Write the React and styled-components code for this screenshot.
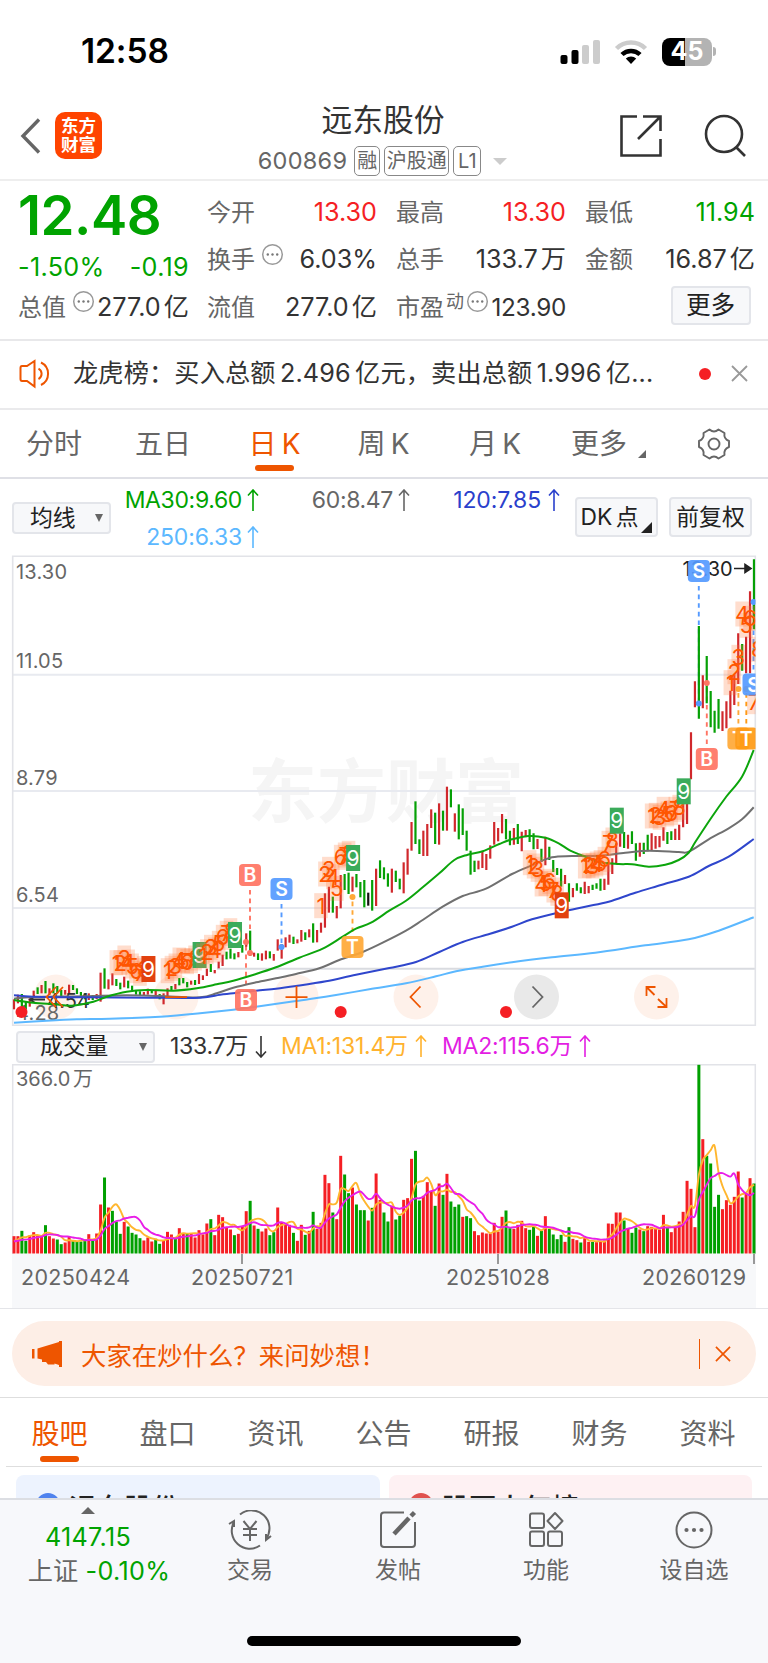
import React from 'react';
import styled, { createGlobalStyle, css } from 'styled-components';

const GREEN = '#00a300';
const RED = '#f51f24';
const ORANGE = '#ee5500';

const Global = createGlobalStyle`
  * { box-sizing: border-box; }
  body { margin: 0; background: #fff; }
`;

const Screen = styled.div`
  width: 768px;
  height: 1663px;
  overflow: hidden;
  display: flex;
  flex-direction: column;
  background: #fff;
  color: #333;
  font-family: Inter, "Noto Sans CJK SC", sans-serif;
  font-size: 24px;
  line-height: 1;
  white-space: nowrap;
`;

/* ---------- status bar ---------- */
const StatusBar = styled.div`
  height: 100px;
  flex: none;
  display: flex;
  align-items: center;
  justify-content: space-between;
  padding: 3px 52px 0 81px;
`;
const Clock = styled.div`
  font-size: 33.5px;
  font-weight: 600;
  color: #000;
  letter-spacing: -0.1px;
`;
const StatusIcons = styled.div`
  display: flex;
  align-items: center;
  gap: 14px;
`;
const Battery = styled.div`
  width: 50px;
  height: 28px;
  border-radius: 8px;
  background: linear-gradient(90deg, #000 0 46%, #b3b3b3 46%);
  color: #fff;
  font-size: 25px;
  font-weight: 700;
  display: flex;
  align-items: center;
  justify-content: center;
`;
const BatteryWrap = styled.div`
  display: flex;
  align-items: center;
  gap: 1px;
`;
const Nub = styled.div`
  width: 3px;
  height: 9px;
  border-radius: 0 4px 4px 0;
  background: #b3b3b3;
`;

/* ---------- header ---------- */
const Header = styled.header`
  height: 81px;
  flex: none;
  display: grid;
  grid-template-columns: 200px 1fr 200px;
  border-bottom: 2px solid #eee;
`;
const HeaderSide = styled.div`
  display: flex;
  align-items: flex-start;
  gap: ${(p) => (p.$end ? '41px' : '13px')};
  justify-content: ${(p) => (p.$end ? 'flex-end' : 'flex-start')};
  padding: ${(p) => (p.$end ? '14px 22px 0 0' : '12px 0 0 20px')};
`;
const Logo = styled.div`
  width: 47px;
  height: 47px;
  border-radius: 10px;
  background: #ff4400;
  color: #fff;
  font-weight: 700;
  font-size: 17.5px;
  line-height: 19px;
  text-align: center;
  padding-top: 4px;
  white-space: pre-line;
`;
const HeaderCenter = styled.div`
  display: flex;
  flex-direction: column;
  align-items: center;
`;
const Title = styled.h1`
  margin: 4px 2px 0 0;
  font-size: 30.8px;
  line-height: 32px;
  font-weight: 400;
`;
const SubTitle = styled.div`
  display: flex;
  align-items: center;
  gap: 4px;
  margin: 10px 3px 0 0;
  height: 30px;
`;
const Code = styled.span`
  font-size: 23.5px;
  letter-spacing: 0.3px;
  color: #666;
  margin-right: 3px;
`;
const Tag = styled.span`
  height: 30px;
  width: ${(p) => p.$w}px;
  text-align: center;
  border: 1.5px solid #888;
  border-radius: 5px;
  font-size: 20px;
  line-height: 28px;
  color: #666;
`;
const Caret = styled.i`
  width: 0;
  height: 0;
  border-left: ${(p) => p.$w / 2}px solid transparent;
  border-right: ${(p) => p.$w / 2}px solid transparent;
  ${(p) => (p.$up ? 'border-bottom' : 'border-top')}: ${(p) => p.$h}px solid ${(p) => p.$color || '#666'};
  margin-left: ${(p) => p.$ml || 0}px;
`;
const Corner = styled.i`
  width: 0;
  height: 0;
  border-left: ${(p) => p.$size}px solid transparent;
  border-bottom: ${(p) => p.$size}px solid ${(p) => p.$color};
  ${(p) => p.$low && css`
    align-self: flex-end;
    margin: 0 0 2px 3px;
  `}
`;

/* ---------- quote ---------- */
const Quote = styled.section`
  height: 160px;
  flex: none;
  display: flex;
  padding: 8px 12px 0 18px;
  border-bottom: 2px solid #e8e8ea;
`;
const PriceColumn = styled.div`
  width: 171px;
  display: flex;
  flex-direction: column;
`;
const Price = styled.div`
  font-size: 54.5px;
  font-weight: 600;
  color: ${GREEN};
  height: 57px;
  line-height: 53px;
  letter-spacing: -0.5px;
`;
const Change = styled.div`
  display: flex;
  justify-content: space-between;
  color: ${GREEN};
  height: 38px;
  line-height: 42px;
  font-size: 25.2px;
  letter-spacing: 0.3px;
`;
const Stats = styled.div`
  flex: 1;
  display: grid;
  grid-template-columns: repeat(3, 170px);
  grid-auto-rows: 47.5px;
  column-gap: 19px;
  padding-left: 18px;
`;
const Stat = styled.div`
  height: 47px;
  display: flex;
  align-items: center;
`;
const StatLabel = styled.span`
  color: #666;
`;
const StatValue = styled.span`
  margin-left: auto;
  color: ${(p) => p.$color || '#333'};
  font-size: ${(p) => (p.$small ? 24.3 : 25.2)}px;
  letter-spacing: ${(p) => (p.$small ? -0.3 : 0)}px;
  word-spacing: -4px;
`;
const Sup = styled.span`
  display: flex;
  align-items: center;
  gap: ${(p) => p.$gap || 0}px;
  font-size: 18px;
  color: #666;
  margin: -12px 0 0 ${(p) => p.$ml}px;
  height: 22px;
`;
const MoreButton = styled.button`
  width: 80px;
  height: 39px;
  margin: 2px 4px 0 auto;
  padding: 0 1px 0 0;
  border: 2px solid #e3e5ea;
  border-radius: 4px;
  background: #f7f8fa;
  font: inherit;
  font-size: 24.6px;
  color: #222;
`;

/* ---------- notice ---------- */
const Notice = styled.section`
  height: 69px;
  flex: none;
  display: flex;
  align-items: center;
  padding: 0 20px 2px 19px;
  border-bottom: 2px solid #eaeaec;
`;
const NoticeText = styled.div`
  margin-left: 20px;
  width: 590px;
  font-size: 25.2px;
  letter-spacing: 0.15px;
  word-spacing: -3px;
`;
const Dot = styled.i`
  width: 12px;
  height: 12px;
  border-radius: 50%;
  background: ${RED};
  margin: 0 20px 0 auto;
`;

/* ---------- tabs ---------- */
const PeriodTabs = styled.nav`
  height: 69px;
  flex: none;
  display: flex;
  align-items: center;
  border-bottom: 2px solid #dfe0e6;
`;
const tabText = css`
  display: flex;
  flex-direction: column;
  align-items: center;
  font-size: 28px;
  color: ${(p) => (p.$active ? ORANGE : '#666')};
  &::after {
    content: '';
    width: 39px;
    height: 6px;
    border-radius: 3px;
    background: ${(p) => (p.$active ? ORANGE : 'transparent')};
  }
`;
const PeriodTab = styled.div`
  ${tabText}
  width: ${(p) => p.$w || 110}px;
  padding-top: 14px;
  gap: 7px;
  word-spacing: -2.5px;
`;
const MoreTab = styled.div`
  display: flex;
  align-items: flex-end;
  gap: 11px;
  color: #666;
  font-size: 28px;
  width: 143px;
  padding-left: 17px;
`;

/* ---------- averages ---------- */
const AverageBar = styled.section`
  height: 76px;
  flex: none;
  display: flex;
  padding: 0 15px 0 12px;
`;
const Select = styled.div`
  width: ${(p) => p.$w}px;
  height: 32px;
  display: flex;
  align-items: center;
  justify-content: space-between;
  padding: 0 6px 0 ${(p) => p.$pl}px;
  border: 2px solid #e3e5ea;
  border-radius: 4px;
  background: #f7f8fa;
  font-size: 22.8px;
  color: #222;
`;
const SelectSlot = styled.div`
  padding-top: 23px;
`;
const Averages = styled.div`
  display: grid;
  grid-template-columns: 149px 151px 150px;
  grid-template-rows: 37px 37px;
  padding-top: 3px;
  width: 464px;
`;
const Average = styled.span`
  display: flex;
  align-items: center;
  justify-content: flex-end;
  gap: ${(p) => p.$gap || 4}px;
  font-size: 23px;
  letter-spacing: ${(p) => p.$ls || -0.35}px;
  color: ${(p) => p.$color};
`;
const ToolButton = styled.div`
  width: 83px;
  height: 40px;
  margin: 18px ${(p) => p.$mr || 0}px 0 0;
  border: 2px solid #e3e5ea;
  border-radius: 4px;
  background: #f7f8fa;
  display: flex;
  align-items: center;
  justify-content: center;
  font-size: 22.8px;
  word-spacing: -3px;
  color: #222;
  flex: none;
`;

/* ---------- charts ---------- */
const ChartArea = styled.section`
  height: 471px;
  flex: none;
  svg { display: block; }
`;
const VolumeBar = styled.div`
  height: 38px;
  flex: none;
  display: flex;
  align-items: center;
  padding: 3px 0 0 16px;
`;
const VolumeItem = styled.span`
  display: flex;
  align-items: center;
  gap: 7px;
  font-size: 23px;
  letter-spacing: -0.25px;
  color: ${(p) => p.$color};
  width: ${(p) => p.$w}px;
  padding-left: ${(p) => p.$pl || 0}px;
`;
const VolumeArea = styled.section`
  height: 190px;
  flex: none;
  svg { display: block; }
`;
const DateAxis = styled.div`
  height: 55px;
  flex: none;
  padding: 0 12px;
  border-bottom: 1px solid #e4e5e9;
`;
const DateStrip = styled.div`
  height: 54px;
  background: #f7f8fa;
  display: flex;
  color: #666;
  font-size: 21.5px;
  letter-spacing: 0.3px;
`;
const DateCell = styled.div`
  width: ${(p) => p.$w}px;
  padding: 13px 0 0 ${(p) => p.$pl}px;
`;
const AxisTicks = styled.div`
  height: 0;
  padding-left: 229px;
  display: flex;
  gap: 254px;
  i { width: 2px; height: 10px; background: #999; flex: none; }
`;

/* ---------- banner ---------- */
const BannerWrap = styled.section`
  height: 89px;
  flex: none;
  padding: 12px 12px 0;
  border-bottom: 1px solid #dedede;
`;
const Banner = styled.div`
  height: 65px;
  border-radius: 32.5px;
  background: #fdeee6;
  color: ${ORANGE};
  display: flex;
  align-items: center;
  padding: 0 25px 0 19px;
  font-size: 25.4px;
`;
const BannerText = styled.span`
  margin-left: 18px;
  padding-top: 4px;
  flex: 1;
`;
const Divider = styled.i`
  width: 1.5px;
  height: 30px;
  background: ${ORANGE};
  margin-right: 15px;
`;

/* ---------- content ---------- */
const SectionTabs = styled.nav`
  height: 69px;
  flex: none;
  display: flex;
  margin: 0 6px;
  border-bottom: 1px solid #dedede;
`;
const SectionTab = styled.div`
  ${tabText}
  width: 108.1px;
  padding: 22px 1px 0 0;
  gap: 8px;
`;
const Cards = styled.section`
  height: 31px;
  flex: none;
  overflow: hidden;
  display: flex;
  gap: 9px;
  padding: 8px 16px 0;
`;
const Card = styled.div`
  width: 363.5px;
  height: 80px;
  border-radius: 8px 8px 0 0;
  background: ${(p) => p.$bg};
  display: flex;
  align-items: flex-start;
  padding: 18px 0 0 20px;
  gap: 9px;
  font-size: 27.5px;
  font-weight: 500;
  line-height: 31px;
  color: #222;
`;
const Badge = styled.i`
  width: 24px;
  height: 24px;
  border-radius: 50%;
  background: ${(p) => p.$color};
`;

/* ---------- bottom bar ---------- */
const BottomBar = styled.footer`
  flex: 1;
  display: flex;
  flex-direction: column;
  background: #f7f8fb;
  border-top: 2px solid #dcdee3;
`;
const Actions = styled.div`
  display: flex;
  height: 136px;
`;
const IndexBox = styled.div`
  width: 176px;
  padding-top: 7px;
  display: flex;
  flex-direction: column;
  align-items: center;
  color: ${GREEN};
`;
const IndexRow = styled.div`
  margin-top: ${(p) => p.$mt}px;
  font-size: 25.2px;
  letter-spacing: 0.3px;
  padding-left: ${(p) => p.$pl || 0}px;
  span { color: #666; letter-spacing: 0; }
`;
const Action = styled.div`
  width: 148px;
  padding-top: 10px;
  display: flex;
  flex-direction: column;
  align-items: center;
  gap: 9px;
  font-size: 23px;
  color: #666;
`;
const HomeBar = styled.div`
  width: 274px;
  height: 10px;
  border-radius: 5px;
  background: #000;
  margin: 0 auto;
`;

/* ---------- icons ---------- */
const Info = () => (
  <svg width="23" height="23" viewBox="0 0 23 23" fill="none" stroke="#999" strokeWidth="1.5">
    <circle cx="11.5" cy="11.5" r="9.8" />
    <g fill="#777" stroke="none"><circle cx="6.8" cy="11.5" r="1.2" /><circle cx="11.5" cy="11.5" r="1.2" /><circle cx="16.2" cy="11.5" r="1.2" /></g>
  </svg>
);
const Cross = ({ color = '#999', size = 17 }) => (
  <svg width={size} height={size} viewBox="0 0 17 17" stroke={color} strokeWidth="1.8"><path d="M1 1L16 16M16 1L1 16" /></svg>
);
const Arrow = ({ down, w = 12 }) => (
  <svg width={w} height="23" viewBox="0 0 12 23" fill="none" stroke="currentColor" strokeWidth="1.6">
    <path d={down ? 'M6 1V22M1 16.5L6 22L11 16.5' : 'M6 22V1M1 6.5L6 1L11 6.5'} />
  </svg>
);

/* ---------- data ---------- */
const STEP = 3.936;
const barX = (i) => 14 + STEP * i;

const volumes = `52R 52R 68G 38G 54R 64R 54R 54R 85G 52R 45R 42G 28G 33R 50R 38G 36G 36G 40G 58R 41G 60R 147R 228G 138R 128G 96G 59G 95R 81G 62G 57G 46G 39R 48R 36R 44G 29G 40R 65R 57R 46G 76R 60R 60G 60R 48R 70R 57R 90R 103G 55R 116R 109R 79R 72R 55G 59R 81R 127R 158G 84R 74G 66R 75R 55G 64G 138R 94R 90R 86R 62G 38R 86R 56G 68R 125G 74R 92R 236R 211R 123G 103R 293R 237G 181G 198R 147G 130G 130G 99R 137G 240R 161R 123G 96G 143R 102G 113G 161R 166R 284R 308G 159G 173R 214R 188R 143G 210R 176G 239R 156G 140G 147G 110R 112G 106G 67R 55R 63R 60R 60R 92R 66R 110R 129G 76G 74R 86R 98R 76R 71G 80G 53R 68G 112R 74G 57G 43G 56G 35R 79G 44R 40R 33G 46R 35R 35G 34R 36R 39R 90R 89R 123R 123R 99G 76R 62G 78G 72R 67G 82R 80R 74R 72R 116R 78G 64R 80R 96R 125R 218R 194R 79R 566G 343R 293G 270G 140G 176G 133R 160R 146R 170R 246R 168G 181R 226R 210G`
  .split(' ')
  .map((s) => ({ h: parseInt(s, 10) / 3, up: s.endsWith('R') }));

const toCandles = (offset, text) =>
  text.split(' ').map((s) => {
    const [, a, b, c] = s.match(/^(-?\d+)-(\d+)([RGK])$/);
    return { top: offset + a / 3, bottom: offset + b / 3, tone: c };
  });

const candles = [
  ...toCandles(850, '448-478R 434-460R 432-480G 455-478G 445-470R 422-440R 412-432G 405-430R 393-430G 415-435R 400-430G 408-430G 420-440G 420-434R 404-432R 405-420G 415-432G 426-440G 430-448G 430-450R 435-450G 432-447R 368-455R 355-416G 388-418R 370-406R 387-408G 398-418G 380-412R 392-415G 407-422G 422-434G 424-438G 426-438R 416-434R 420-430G 420-438R 432-448G 430-463R 415-440R 408-420G 402-418R 384-406G 384-400G 396-412G 392-404R 390-405G 372-402R 376-390R 356-378R 342-366G 360-370R 335-355R 314-348R 305-328G 296-326G 310-328G 306-322R 285-308G 250-290R 242-318G 308-320R'),
  ...toCandles(740, '640-660G 640-662R 632-658R 634-655G 642-662R 598-632R 612-656R 592-622R 584-608R 590-612G 598-610R 570-605R 577-600G 568-592R 550-608G 570-607R 548-578R 460-563R 440-518R 470-518G 498-535R 405-505R 402-450G 398-462G 410-455R 402-442G 426-472G 420-502G 458-497K 420-512G 386-498R 361-414G 382-418G 400-440G 386-458R 392-426G 416-448G 367-460R 326-404R 246-332R 184-312G 298-342G 272-348R 252-348R 208-264R 218-312G 190-314R 212-272G 140-272R 148-202G 220-275R 193-298G 205-285G 272-332G 332-404G 362-396G 362-388R 334-384R 342-390R 316-356R 246-314R 264-304R 222-280R 237-298G 272-316G'),
  ...toCandles(740, '264-314R 252-312G 275-334R 270-292R 268-306G 280-328G 297-327R 326-366G 290-376R 320-360G 360-396G 384-405G 386-440G 405-432R 430-485G 444-472R 430-452G 442-460G 425-462R 438-460R 434-450G 430-446G 416-452G 416-450R 368-434R 355-402R 310-372R 280-320R 276-324G 284-326R 274-312G 310-362G 308-350R 308-342G 284-334G 280-332R 288-326R 288-322R 262-302R 276-312G 274-300G 266-300R 254-300R 190-262R 150-252R -23-118R'),
  ...toCandles(550, '394-472R 228-506G 376-475R 318-460G 423-532G 482-548G 447-536G 484-543R 454-535R 422-505R 374-465R 250-402R 282-362G 260-370R 124-370R 28-238G'),
];
const tones = { R: '#d0282c', G: '#05a005', K: '#111' };

const smooth = (pts) => {
  let d = `M${pts[0][0]} ${pts[0][1]}`;
  for (let i = 0; i < pts.length - 1; i += 1) {
    const p0 = pts[i - 1] || pts[i];
    const p1 = pts[i];
    const p2 = pts[i + 1];
    const p3 = pts[i + 2] || p2;
    const c = [p1[0] + (p2[0] - p0[0]) / 6, p1[1] + (p2[1] - p0[1]) / 6, p2[0] - (p3[0] - p1[0]) / 6, p2[1] - (p3[1] - p1[1]) / 6];
    d += `C${c.map((n) => n.toFixed(1)).join(' ')} ${p2[0]} ${p2[1]}`;
  }
  return d;
};
const part = (ox, oy, pts) => pts.map(([x, y]) => [+(ox + x / 3).toFixed(1), +(oy + y / 3).toFixed(1)]);

const lines = [
  {
    color: '#5cb8ff',
    pts: [
      ...part(0, 850, [[42, 518], [140, 512], [230, 508], [330, 506], [480, 500], [600, 490], [700, 479]]),
      ...part(256, 740, [[0, 800], [120, 783], [240, 765], [340, 748], [450, 730], [540, 709], [600, 694], [680, 680]]),
      ...part(512, 740, [[0, 667], [120, 652], [250, 638], [400, 616], [530, 598], [620, 572], [725, 532]]),
    ],
  },
  {
    color: '#707070',
    pts: [
      ...part(0, 850, [[42, 446], [100, 441], [250, 439], [380, 436], [480, 438], [600, 442], [650, 430], [700, 413]]),
      ...part(256, 740, [[0, 727], [60, 715], [120, 702], [190, 685], [250, 660], [320, 636], [380, 608], [450, 572], [500, 540], [560, 500], [620, 468], [690, 446]]),
      ...part(512, 740, [[0, 402], [60, 376], [120, 352], [180, 348], [260, 347], [340, 338], [410, 332], [500, 336], [530, 335], [590, 298], [650, 265], [690, 238], [725, 202]]),
    ],
  },
  {
    color: '#2f46cc',
    pts: [
      ...part(0, 850, [[42, 436], [100, 440], [250, 442], [450, 443], [600, 443], [660, 434], [700, 430]]),
      ...part(256, 740, [[0, 752], [60, 746], [120, 738], [210, 724], [300, 704], [400, 684], [480, 666], [550, 636], [620, 606], [700, 582]]),
      ...part(512, 740, [[0, 560], [60, 538], [150, 515], [220, 500], [290, 485], [370, 458], [450, 434], [530, 410], [590, 378], [650, 350], [725, 297]]),
    ],
  },
  {
    color: '#0ca50c',
    pts: [
      ...part(0, 850, [[42, 450], [100, 458], [165, 463], [215, 467], [280, 455], [320, 440], [380, 425], [440, 420], [520, 422], [590, 415], [650, 403], [700, 392]]),
      ...part(256, 740, [[0, 702], [60, 682], [130, 653], [200, 626], [260, 590], [300, 566], [345, 548], [400, 512], [450, 482], [500, 442], [550, 400], [595, 360], [635, 344], [680, 334], [730, 312]]),
      ...part(512, 740, [[0, 298], [50, 288], [100, 293], [140, 310], [175, 332], [215, 348], [260, 366], [320, 372], [360, 373], [410, 380], [460, 374], [500, 360], [530, 338], [550, 306], [600, 230], [640, 174], [690, 110], [725, 30]]),
    ],
  },
];

const runs = [
  { start: 26, oy: 850, ys: [338, 338, 324, 336, 348, 362, 370, 356], nine: 357, color: '#e2410f' },
  { start: 39, oy: 850, ys: [362, 355, 348, 330, 332, 335, 332, 324], nine: 315, color: '#3bab5a' },
  { start: 48, oy: 850, ys: [318, 305, 292, 300, 280, 262, 250, 242], nine: 255, color: '#3bab5a' },
  { start: 78, oy: 740, ys: [497, 402, 388, 410, 445, 352, 345, 340], nine: 354, color: '#3bab5a' },
  { start: 131, oy: 740, ys: [368, 378, 388, 432, 430, 424, 450, 460], nine: 496, color: '#e2410f' },
  { start: 145, oy: 740, ys: [378, 376, 378, 372, 368, 358, 310, 300], nine: 242, color: '#3bab5a' },
  { start: 162, oy: 740, ys: [228, 226, 232, 208, 222, 218, 208, 202], nine: 154, color: '#3bab5a' },
  { start: 182, oy: 550, ys: [398, 365, 322, 192, 226, 205, 455, 298] },
];

const signals = [
  { t: 'B', x: 250, y: 875, dot: 953, c: '#ff7463' },
  { t: 'B', x: 246, y: 1000, dot: 942, c: '#ff7463' },
  { t: 'S', x: 281.5, y: 889, dot: 947, c: '#559aff' },
  { t: 'T', x: 352.5, y: 947, dot: 897, c: '#ffa836' },
  { t: 'S', x: 698.8, y: 571, dot: 703.5, c: '#559aff' },
  { t: 'B', x: 706.8, y: 759, dot: 683, c: '#ff7463' },
  { t: 'T', x: 738.4, y: 738.5, dot: 689, c: '#ffa836' },
  { t: 'T', x: 746.3, y: 738.5, dot: 689, c: '#ff9a14' },
  { t: 'S', x: 753.5, y: 684.5, dot: 602, c: '#559aff' },
];

const average = (n) =>
  volumes.map((_, i) => {
    let sum = 0;
    for (let k = i - n + 1; k <= i; k += 1) sum += k < 0 ? 11.5 : volumes[k].h;
    return [+barX(i).toFixed(1), +(189.5 - sum / n).toFixed(1)];
  });

const KLine = () => (
  <svg width="768" height="471" viewBox="0 555 768 471" fontFamily='Inter, "Noto Sans CJK SC", sans-serif'>
    <defs><clipPath id="plot"><rect x="12" y="555" width="743.5" height="471" /></clipPath></defs>
    <text x="386" y="817" fontSize="69" fontWeight="700" fill="#f5f5f5" textAnchor="middle">东方财富</text>
    <g stroke="#e8eaf0" strokeWidth="2">
      <path d="M12 674.7H755M12 791H755M12 908H755" />
      <path d="M217 968.7H755" stroke="#d9dbe0" />
      <path d="M12.7 1025.3V556.3H755.3V1025.3Z" fill="none" stroke="#e2e3e8" strokeWidth="1.6" />
    </g>
    {[56, 176, 296, 416, 536.5, 656.5].map((x) => (
      <circle key={x} cx={x} cy="997" r="22.5" fill={x === 536.5 ? '#e9e9e9' : '#fef1ea'} />
    ))}
    <g fontSize="20" fill="#666" letterSpacing="0.2">
      <text x="16" y="578.5">13.30</text>
      <text x="16" y="668">11.05</text>
      <text x="16" y="785">8.79</text>
      <text x="16" y="902">6.54</text>
      <text x="16" y="1019.5">4.28</text>
    </g>
    <g clipPath="url(#plot)">
      {signals.map((s, i) => (
        <path key={i} d={`M${s.x} ${s.y + (s.dot > s.y ? 15 : -15)}V${s.dot}`} stroke={s.c} strokeWidth="1.9" strokeDasharray="4.6 4" />
      ))}
      {candles.map((c, i) => (
        <line key={i} x1={barX(i)} x2={barX(i)} y1={c.top} y2={c.bottom} stroke={tones[c.tone]} strokeWidth="2.2" />
      ))}
      <g fill="#333" stroke="#333">
        <path d="M45 999.5H30M35 996L30 999.5L35 1003" fill="none" strokeWidth="2" />
        <text x="47" y="1008" fontSize="20" stroke="none">4.54</text>
      </g>
      <text x="682.5" y="576" fontSize="20" fill="#222">13.30</text>
      <path d="M734 568.5H750M745 564.5L751 568.5L745 572.5Z" stroke="#222" strokeWidth="1.6" fill="#222" />
      {lines.map((l) => <path key={l.color} d={smooth(l.pts)} stroke={l.color} strokeWidth="2" fill="none" />)}
      {runs.map((r) => (
        <g key={r.start}>
          {r.ys.map((y, k) => (
            <rect key={k} x={barX(r.start + k) - 6.8} y={r.oy + y / 3 - 12.5} width="13.6" height="25" fill="#ff7a3c" opacity="0.26" />
          ))}
          <g fontSize="22" fill="#ff5500" textAnchor="middle">
            {r.ys.map((y, k) => <text key={k} x={barX(r.start + k)} y={r.oy + y / 3 + 8}>{k + 1}</text>)}
          </g>
          {r.nine && <rect x={barX(r.start + 8) - 6.4} y={r.oy + r.nine / 3 - 13} width="14" height="26" fill={r.color} />}
          {r.nine && <text x={barX(r.start + 8) + 0.6} y={r.oy + r.nine / 3 + 7.5} fontSize="21" fill="#fff" textAnchor="middle">9</text>}
        </g>
      ))}
      {signals.map((s, i) => (
        <g key={i}>
          <circle cx={s.x} cy={s.dot} r="3" fill={s.c} />
          <rect x={s.x - 11} y={s.y - 11} width="22" height="22" rx="4" fill={s.c} fillOpacity="0.92" />
          <text x={s.x} y={s.y + 7} fontSize="19.5" fontWeight="600" fill="#fff" textAnchor="middle">{s.t}</text>
        </g>
      ))}
    </g>
    <g fill="none" stroke={ORANGE} strokeWidth="1.8">
      <path d="M56 987L46.5 997L56 1007M63 987L53.5 997L63 1007" />
      <path d="M165 997.2H187M285.5 997.2H307.5M296.5 986V1008" />
      <path d="M420.5 986.5L410.5 997L420.5 1007.5" />
      <path d="M646.5 996V987H655.5M646.5 987L654.5 995M666.5 998V1007H657.5M666.5 1007L658 999" />
    </g>
    <path d="M532.5 986.5L542.5 997L532.5 1007.5" fill="none" stroke="#666" strokeWidth="1.8" />
    <g fill={RED}><circle cx="21.5" cy="1012" r="6" /><circle cx="340.7" cy="1012" r="6" /><circle cx="506" cy="1012" r="6" /></g>
  </svg>
);

const Volume = () => (
  <svg width="768" height="190" viewBox="0 0 768 190" fontFamily='Inter, "Noto Sans CJK SC", sans-serif'>
    <path d="M12.7 190V0.8H755.3V190" fill="none" stroke="#e2e3e8" strokeWidth="1.5" />
    <text x="16" y="21.5" fontSize="20" fill="#666" wordSpacing="-3">366.0 万</text>
    {volumes.map((v, i) => (
      <rect key={i} x={barX(i) - 1.5} y={189.5 - v.h} width="3" height={v.h} fill={v.up ? RED : '#00a000'} />
    ))}
    <path d={smooth(average(5))} stroke="#ffb62e" strokeWidth="1.9" fill="none" />
    <path d={smooth(average(10))} stroke="#e81ee8" strokeWidth="1.9" fill="none" />
  </svg>
);

export default function App() {
  return (
    <Screen>
      <Global />
      <StatusBar>
        <Clock>12:58</Clock>
        <StatusIcons>
          <svg width="40" height="26" viewBox="0 0 40 26">
            <rect x="0.5" y="16" width="7" height="9" rx="2" />
            <rect x="11.5" y="11" width="7" height="14" rx="2" />
            <rect x="22" y="6" width="7" height="19" rx="2" fill="#ccc" />
            <rect x="33" y="1" width="7" height="24" rx="2" fill="#ccc" />
          </svg>
          <svg width="34" height="26" viewBox="0 0 34 26" fill="none" strokeWidth="4.5">
            <path d="M2.5 9.5A20.5 20.5 0 0 1 31.5 9.5" stroke="#ccc" />
            <path d="M8 15.5A13 13 0 0 1 26 15.5" stroke="#000" />
            <path d="M17 25L11.8 19.5A7.5 7.5 0 0 1 22.2 19.5Z" fill="#000" />
          </svg>
          <BatteryWrap><Battery>45</Battery><Nub /></BatteryWrap>
        </StatusIcons>
      </StatusBar>

      <Header>
        <HeaderSide>
          <svg width="22" height="47" viewBox="0 0 22 47" fill="none" stroke="#666" strokeWidth="3.4"><path d="M19 7.5L3 24L19 40.5" /></svg>
          <Logo>{'东方\n财富'}</Logo>
        </HeaderSide>
        <HeaderCenter>
          <Title>远东股份</Title>
          <SubTitle>
            <Code>600869</Code>
            <Tag $w={26}>融</Tag><Tag $w={65}>沪股通</Tag><Tag $w={28}>L1</Tag>
            <Caret $w={14} $h={7} $color="#ccc" $ml={8} />
          </SubTitle>
        </HeaderCenter>
        <HeaderSide $end>
          <svg width="44" height="44" viewBox="0 0 44 44" fill="none" stroke="#333" strokeWidth="2.6">
            <path d="M18 2.5H2.5V41.5H41.5V25M24 2.5H41.5V17M41.5 2.5L19 25" />
          </svg>
          <svg width="42" height="44" viewBox="0 0 42 44" fill="none" stroke="#333" strokeWidth="2.6">
            <circle cx="20" cy="20" r="18" /><path d="M32 33L41 42" />
          </svg>
        </HeaderSide>
      </Header>

      <Quote>
        <PriceColumn>
          <Price>12.48</Price>
          <Change><span>-1.50%</span><span>-0.19</span></Change>
          <Stat>
            <StatLabel>总值</StatLabel><Sup $ml={6}><Info /></Sup><StatValue>277.0 亿</StatValue>
          </Stat>
        </PriceColumn>
        <Stats>
          <Stat><StatLabel>今开</StatLabel><StatValue $color={RED}>13.30</StatValue></Stat>
          <Stat><StatLabel>最高</StatLabel><StatValue $color={RED}>13.30</StatValue></Stat>
          <Stat><StatLabel>最低</StatLabel><StatValue $color={GREEN}>11.94</StatValue></Stat>
          <Stat><StatLabel>换手</StatLabel><Sup $ml={6}><Info /></Sup><StatValue>6.03%</StatValue></Stat>
          <Stat><StatLabel>总手</StatLabel><StatValue>133.7 万</StatValue></Stat>
          <Stat><StatLabel>金额</StatLabel><StatValue>16.87 亿</StatValue></Stat>
          <Stat><StatLabel>流值</StatLabel><StatValue>277.0 亿</StatValue></Stat>
          <Stat><StatLabel>市盈</StatLabel><Sup $ml={2} $gap={2}>动<Info /></Sup><StatValue $small>123.90</StatValue></Stat>
          <MoreButton>更多</MoreButton>
        </Stats>
      </Quote>

      <Notice>
        <svg width="34" height="30" viewBox="0 0 34 30" fill="none" stroke={ORANGE} strokeWidth="2">
          <path d="M15.5 2L8 7H3Q1.5 7 1.5 9V20Q1.5 22 3 22H8L15.5 27.5Z" />
          <path d="M19.5 9.5A6 6 0 0 1 19.5 20M22 3.5A12.5 12.5 0 0 1 22 26" />
        </svg>
        <NoticeText>龙虎榜：买入总额 2.496 亿元，卖出总额 1.996 亿...</NoticeText>
        <Dot />
        <Cross />
      </Notice>

      <PeriodTabs>
        <PeriodTab $w={108}>分时</PeriodTab>
        <PeriodTab $w={110}>五日</PeriodTab>
        <PeriodTab $w={113} $active>日 K</PeriodTab>
        <PeriodTab $w={105}>周 K</PeriodTab>
        <PeriodTab $w={118}>月 K</PeriodTab>
        <MoreTab>更多<Corner $size={8} $color="#666" /></MoreTab>
        <svg width="34" height="34" viewBox="0 0 34 34" fill="none" stroke="#666" strokeWidth="1.9" strokeLinejoin="round">
          <path d="M12.5 2.5Q17 6.5 21.5 2.5L27.5 6Q26.5 12 32 14V20Q26.5 22 27.5 28L21.5 31.5Q17 27.5 12.5 31.5L6.5 28Q7.5 22 2 20V14Q7.5 12 6.5 6Z" />
          <circle cx="17" cy="17" r="5.5" />
        </svg>
      </PeriodTabs>

      <AverageBar>
        <SelectSlot><Select $w={99} $pl={16}>均线<Caret $w={9} $h={8} /></Select></SelectSlot>
        <Averages>
          <Average $color={GREEN}>MA30:9.60<Arrow w={14} /></Average>
          <Average $color="#666">60:8.47<Arrow w={14} /></Average>
          <Average $color="#2a40cc" $gap={6} $ls={-0.15}>120:7.85<Arrow w={14} /></Average>
          <Average $color="#5cb8ff" $ls={-0.15}>250:6.33<Arrow w={14} /></Average>
        </Averages>
        <ToolButton $mr={11}>DK 点<Corner $size={11} $color="#222" $low /></ToolButton>
        <ToolButton>前复权</ToolButton>
      </AverageBar>

      <ChartArea><KLine /></ChartArea>
      <VolumeBar>
        <Select $w={139} $pl={22}>成交量<Caret $w={9} $h={8} /></Select>
        <VolumeItem $w={126} $pl={15} $color="#333">133.7万<Arrow down /></VolumeItem>
        <VolumeItem $w={161} $color="#ffb22e">MA1:131.4万<Arrow /></VolumeItem>
        <VolumeItem $w={160} $color="#e31ee3">MA2:115.6万<Arrow /></VolumeItem>
      </VolumeBar>
      <VolumeArea><Volume /></VolumeArea>
      <DateAxis>
        <AxisTicks><i /><i /><i /></AxisTicks>
        <DateStrip>
          <DateCell $w={178} $pl={9}>20250424</DateCell>
          <DateCell $w={256} $pl={1}>20250721</DateCell>
          <DateCell $w={196} $pl={0}>20251028</DateCell>
          <DateCell $w={114} $pl={0}>20260129</DateCell>
        </DateStrip>
      </DateAxis>

      <BannerWrap>
        <Banner>
          <svg width="32" height="28" viewBox="0 0 32 28" fill={ORANGE}>
            <path d="M1 9H3.5V18.5H1ZM6.5 8.5L28 2V1H31V27H28V25L23.5 23.5V24.5H17L15 22H11V19.5L6.5 18.5Z" />
          </svg>
          <BannerText>大家在炒什么？来问妙想！</BannerText>
          <Divider />
          <Cross color={ORANGE} size={16} />
        </Banner>
      </BannerWrap>

      <SectionTabs>
        {['股吧', '盘口', '资讯', '公告', '研报', '财务', '资料'].map((t, i) => (
          <SectionTab key={t} $active={i === 0}>{t}</SectionTab>
        ))}
      </SectionTabs>
      <Cards>
        <Card $bg="#edf3fe"><Badge $color="#4f82ee" />远东股份</Card>
        <Card $bg="#fef1f3"><Badge $color="#e0524e" />股票人气榜</Card>
      </Cards>

      <BottomBar>
        <Actions>
          <IndexBox>
            <Caret $up $w={14} $h={7} />
            <IndexRow $mt={11}>4147.15</IndexRow>
            <IndexRow $mt={9} $pl={22}><span>上证</span> -0.10%</IndexRow>
          </IndexBox>
          <Action>
            <svg width="44" height="40" viewBox="0 0 44 40" fill="none" stroke="#666" strokeWidth="2">
              <path d="M12 4.5A18 18 0 0 1 38 29M38 24V30L43 26M32 35.5A18 18 0 0 1 6 12M1 14L6 11V17" />
              <path d="M15.5 11L22 19L28.5 11M15 19H29M15 25H29M22 19V31" />
            </svg>
            交易
          </Action>
          <Action>
            <svg width="40" height="40" viewBox="0 0 40 40" fill="none" stroke="#666" strokeWidth="2">
              <path d="M26 2.5H6Q3 2.5 3 5.5V34Q3 37 6 37H34Q37 37 37 34V12" />
              <path d="M16 24L31 8" strokeWidth="4.5" /><path d="M33 6L36.5 2.5" strokeWidth="4.5" />
            </svg>
            发帖
          </Action>
          <Action>
            <svg width="40" height="40" viewBox="0 0 40 40" fill="none" stroke="#666" strokeWidth="2">
              <rect x="4" y="3.5" width="14" height="14.5" rx="2" />
              <rect x="4" y="21.5" width="14" height="14.5" rx="2" />
              <rect x="22" y="21.5" width="14" height="14.5" rx="2" />
              <path d="M29 3L36.5 11L29 19L21.5 11Z" strokeLinejoin="round" />
            </svg>
            功能
          </Action>
          <Action>
            <svg width="40" height="40" viewBox="0 0 40 40" fill="none" stroke="#666" strokeWidth="2">
              <circle cx="20" cy="20" r="17.5" />
              <g fill="#666" stroke="none"><circle cx="12.5" cy="20" r="2.1" /><circle cx="20" cy="20" r="2.1" /><circle cx="27.5" cy="20" r="2.1" /></g>
            </svg>
            设自选
          </Action>
        </Actions>
        <HomeBar />
      </BottomBar>
    </Screen>
  );
}
